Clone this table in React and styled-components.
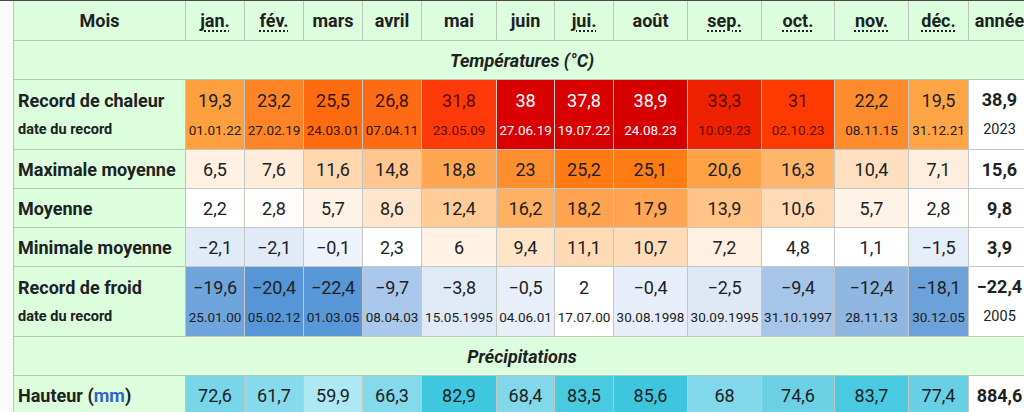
import React from "react";
import styled, { createGlobalStyle } from "styled-components";

const GlobalStyle = createGlobalStyle`
  html, body {
    margin: 0;
    padding: 0;
    background: #fafafa;
    overflow: hidden;
  }
  body {
    font-family: Roboto, "Noto Sans", "Liberation Sans", sans-serif;
    color: #202122;
  }
`;

const MONTHS = [
  { label: "jan.", abbr: true },
  { label: "fév.", abbr: true },
  { label: "mars" },
  { label: "avril" },
  { label: "mai" },
  { label: "juin" },
  { label: "jui.", abbr: true },
  { label: "août" },
  { label: "sep.", abbr: true },
  { label: "oct.", abbr: true },
  { label: "nov.", abbr: true },
  { label: "déc.", abbr: true },
];

const WIDTHS = [172, 59, 59, 59, 59, 75, 58, 59, 74, 74, 73, 74, 60, 62];

const DARK = "#202122";
const WHITE = "#ffffff";
const BROWN = "#5e0c00";

const heat = {
  values: ["19,3", "23,2", "25,5", "26,8", "31,8", "38", "37,8", "38,9", "33,3", "31", "22,2", "19,5"],
  dates: ["01.01.22", "27.02.19", "24.03.01", "07.04.11", "23.05.09", "27.06.19", "19.07.22", "24.08.23", "10.09.23", "02.10.23", "08.11.15", "31.12.21"],
  bg: ["#ffa040", "#ff8428", "#ff6c10", "#ff6a14", "#ff3a0a", "#d80000", "#d80000", "#d70000", "#ee2200", "#ff3a00", "#ff8b2c", "#ffa545"],
  fg: [DARK, DARK, "#3a1200", "#3a1200", BROWN, WHITE, WHITE, WHITE, BROWN, BROWN, DARK, DARK],
  year: "38,9",
  yearDate: "2023",
};

const cold = {
  values: ["−19,6", "−20,4", "−22,4", "−9,7", "−3,8", "−0,5", "2", "−0,4", "−2,5", "−9,4", "−12,4", "−18,1"],
  dates: ["25.01.00", "05.02.12", "01.03.05", "08.04.03", "15.05.1995", "04.06.01", "17.07.00", "30.08.1998", "30.09.1995", "31.10.1997", "28.11.13", "30.12.05"],
  bg: ["#6fa5dc", "#5696d6", "#5898d8", "#a9c8ec", "#e0eaf7", "#e8eff9", "#ffffff", "#e7eef9", "#dfe9f6", "#a6c5e9", "#8fb7e2", "#6ca1da"],
  year: "−22,4",
  yearDate: "2005",
};

const simpleRows = [
  {
    label: "Maximale moyenne",
    values: ["6,5", "7,6", "11,6", "14,8", "18,8", "23", "25,2", "25,1", "20,6", "16,3", "10,4", "7,1"],
    bg: ["#fff1e3", "#ffecd9", "#ffd6ae", "#ffc690", "#ffa652", "#ff8f2e", "#ff7a12", "#ff7b14", "#ffa145", "#ffb56c", "#ffdfbf", "#ffeedd"],
    year: "15,6",
  },
  {
    label: "Moyenne",
    values: ["2,2", "2,8", "5,7", "8,6", "12,4", "16,2", "18,2", "17,9", "13,9", "10,6", "5,7", "2,8"],
    bg: ["#ffffff", "#fffdfb", "#fff3e7", "#ffe5cb", "#ffcb97", "#ffb062", "#ffa350", "#ffa553", "#ffc287", "#ffdab6", "#fff3e7", "#fffdfb"],
    year: "9,8",
  },
  {
    label: "Minimale moyenne",
    values: ["−2,1", "−2,1", "−0,1", "2,3", "6", "9,4", "11,1", "10,7", "7,2", "4,8", "1,1", "−1,5"],
    bg: ["#e1ebf7", "#e1ebf7", "#eef3fb", "#ffffff", "#fff3e6", "#ffe4c8", "#ffdab4", "#ffdcb8", "#fff0e1", "#ffffff", "#ffffff", "#e5eef8"],
    year: "3,9",
  },
];

const rain = {
  values: ["72,6", "61,7", "59,9", "66,3", "82,9", "68,4", "83,5", "85,6", "68", "74,6", "83,7", "77,4"],
  bg: ["#78d6e8", "#86daeb", "#aee8f2", "#84d9ea", "#40c8e0", "#80d8ea", "#48cae1", "#3fc6df", "#80d8ea", "#6cd1e5", "#48cae1", "#68d0e4"],
  year: "884,6",
};

const Page = styled.div`
  border-top: 1px solid #4a4a4a;
  padding-left: 13px;
`;

const Table = styled.table`
  border-collapse: collapse;
  table-layout: fixed;
  width: ${WIDTHS.reduce((a, b) => a + b, 0)}px;
  background: #ddfedd;
`;

const HeadCell = styled.th`
  height: 39px;
  padding: 0;
  font-size: 18px;
  font-weight: 700;
  text-align: center;
  border: 1px solid #b9c6b9;
  border-top: none;
  background: #ddfedd;
`;

const Abbr = styled.abbr`
  text-decoration: underline dotted;
  text-decoration-thickness: 1.5px;
  text-underline-offset: 3px;
  cursor: help;
`;

const SectionCell = styled.th`
  height: 38px;
  padding: 0;
  font-size: 18px;
  font-style: italic;
  font-weight: 700;
  text-align: center;
  border: 1px solid #b9c6b9;
  background: #ddfedd;
`;

const LabelCell = styled.th`
  height: ${(p) => (p.$tall ? 69 : 38)}px;
  padding: 0 0 0 4px;
  text-align: left;
  font-weight: 700;
  font-size: 18px;
  border: 1px solid #b9c6b9;
  background: #ddfedd;
  white-space: nowrap;
`;

const LabelStack = styled.div`
  display: flex;
  flex-direction: column;
  gap: 10px;
  padding-bottom: 2px;
`;

const SubLabel = styled.span`
  font-size: 14.5px;
`;

const ValueCell = styled.td`
  padding: 0;
  text-align: center;
  font-size: 18px;
  color: ${(p) => p.$fg || DARK};
  background: ${(p) => p.$bg || "#ffffff"};
  border: 1px solid #c3c8c3;
  font-weight: ${(p) => (p.$bold ? 700 : 400)};
  white-space: nowrap;
`;

const ValueStack = styled.div`
  display: flex;
  flex-direction: column;
  align-items: center;
  gap: 11px;
  padding-bottom: 2px;
`;

const DateText = styled.span`
  font-size: ${(p) => (p.$year ? 14.5 : 13.5)}px;
  font-weight: 400;
`;

const Unit = styled.span`
  color: #3366cc;
`;

const RecordRow = ({ label, data }) => (
  <tr>
    <LabelCell $tall>
      <LabelStack>
        <span>{label}</span>
        <SubLabel>date du record</SubLabel>
      </LabelStack>
    </LabelCell>
    {data.values.map((v, i) => (
      <ValueCell key={i} $bg={data.bg[i]} $fg={data.fg ? data.fg[i] : DARK}>
        <ValueStack>
          <span>{v}</span>
          <DateText>{data.dates[i]}</DateText>
        </ValueStack>
      </ValueCell>
    ))}
    <ValueCell>
      <ValueStack>
        <b>{data.year}</b>
        <DateText $year>{data.yearDate}</DateText>
      </ValueStack>
    </ValueCell>
  </tr>
);

const SimpleRow = ({ label, values, bg, year }) => (
  <tr>
    <LabelCell>{label}</LabelCell>
    {values.map((v, i) => (
      <ValueCell key={i} $bg={bg[i]}>
        {v}
      </ValueCell>
    ))}
    <ValueCell $bold>{year}</ValueCell>
  </tr>
);

const Section = ({ children }) => (
  <tr>
    <SectionCell colSpan={14}>{children}</SectionCell>
  </tr>
);

const App = () => (
  <Page>
    <GlobalStyle />
    <Table>
      <colgroup>
        {WIDTHS.map((w, i) => (
          <col key={i} style={{ width: w }} />
        ))}
      </colgroup>
      <thead>
        <tr>
          <HeadCell>Mois</HeadCell>
          {MONTHS.map((m) => (
            <HeadCell key={m.label}>
              {m.abbr ? <Abbr>{m.label}</Abbr> : m.label}
            </HeadCell>
          ))}
          <HeadCell>année</HeadCell>
        </tr>
      </thead>
      <tbody>
        <Section>Températures (°C)</Section>
        <RecordRow label="Record de chaleur" data={heat} />
        {simpleRows.map((r) => (
          <SimpleRow key={r.label} {...r} />
        ))}
        <RecordRow label="Record de froid" data={cold} />
        <Section>Précipitations</Section>
        <tr>
          <LabelCell>
            Hauteur (<Unit>mm</Unit>)
          </LabelCell>
          {rain.values.map((v, i) => (
            <ValueCell key={i} $bg={rain.bg[i]}>
              {v}
            </ValueCell>
          ))}
          <ValueCell $bold>{rain.year}</ValueCell>
        </tr>
      </tbody>
    </Table>
  </Page>
);

export default App;
